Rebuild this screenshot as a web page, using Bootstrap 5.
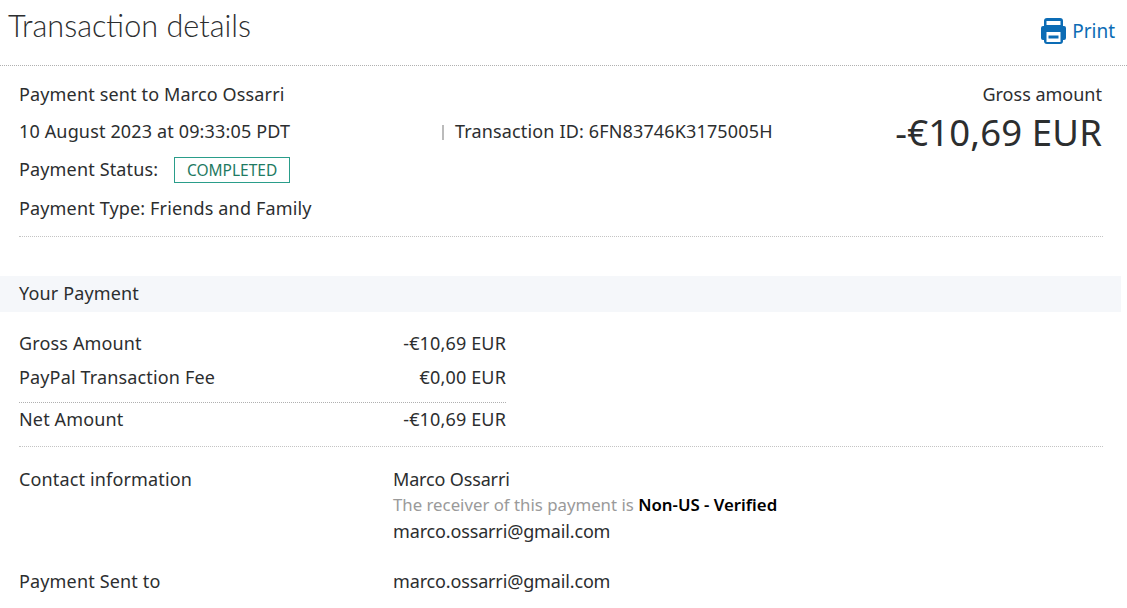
<!DOCTYPE html>
<html lang="en">
<head>
  <meta charset="UTF-8" />
  <title>Transaction details</title>
  <link href="https://cdn.jsdelivr.net/npm/bootstrap@5.3.0/dist/css/bootstrap.min.css" rel="stylesheet" />
  <style>
    body {
      font-family: "Noto Sans", "Open Sans", sans-serif;
      font-size: 18px;
      letter-spacing: .15px;
      color: #2c2e2f;
      background: #fff;
      overflow: hidden;
      height: 608px;
    }
    .page-head {
      height: 66px;
      border-bottom: 1px dotted #b0b0b0;
      padding: 0 12px 0 8px;
    }
    .page-title {
      font-family: "Lato", "Noto Sans", sans-serif;
      font-size: 30.6px;
      font-weight: 300;
      letter-spacing: 0;
      line-height: 52px;
      margin: 0;
      color: #2c2e2f;
    }
    .print-link {
      color: #0c6cb5;
      font-size: 19px;
      letter-spacing: 0;
      text-decoration: none;
      margin-top: 17px;
      gap: 6px;
    }
    .summary {
      margin: 0 24px 0 19px;
      height: 171px;
      border-bottom: 1px dotted #c4c4c4;
      padding-top: 9px;
    }
    .line-a { height: 38px; line-height: 38px; }
    .line-top { height: 37px; }
    .line-status { height: 39px; }
    .date-col { width: 423px; }
    .txn-id::before { content: ""; display: inline-block; width: 2px; height: 15px; background: #bbb; margin-right: 11px; vertical-align: -2px; }
    .amount-col { margin-right: 1px; }
    .amount-label { letter-spacing: 0; }
    .status-tag {
      border: 1px solid #2a9d8a;
      color: #1f7a62;
      font-size: 15.5px;
      letter-spacing: 0;
      line-height: 24px;
      width: 116px;
      text-align: center;
      margin-left: 11px;
      display: inline-block;
    }
    .gross-amt { font-size: 36.5px; line-height: 40px; font-weight: 400; }
    .band {
      margin-top: 39px;
      width: 1121px;
      height: 36px;
      line-height: 34px;
      background: #f5f7fa;
      padding-left: 19px;
    }
    .fees { margin: 14px 24px 0 19px; padding-bottom: 9px; border-bottom: 1px dotted #c4c4c4; }
    .fee-row { width: 487px; height: 34px; line-height: 34px; }
    .fee-net { border-top: 1px dotted #b0b0b0; height: 35px; margin-top: 8px; line-height: 32px; }
    .info { margin: 19px 24px 0 19px; }
    .info-label { width: 374px; flex: none; }
    .info-val { line-height: 26px; letter-spacing: -.15px; }
    .muted-line { color: #9a9a9a; font-size: 16.8px; letter-spacing: 0; }
    .muted-line b { color: #000; font-weight: 600; }
    .info-next { margin-top: 24px; }
  </style>
</head>
<body>
  <div class="page-head d-flex justify-content-between align-items-start">
    <h1 class="page-title">Transaction details</h1>
    <a class="print-link d-flex align-items-center" href="#">
      <svg width="25" height="26" viewBox="0 0 25 26"><path fill="#0c6cb5" fill-rule="evenodd" d="M6 0h13a3 3 0 0 1 3 3v5h1a2 2 0 0 1 2 2v10a2 2 0 0 1-2 2h-1v1a3 3 0 0 1-3 3H6a3 3 0 0 1-3-3v-1H2a2 2 0 0 1-2-2V10a2 2 0 0 1 2-2h1V3a3 3 0 0 1 3-3zM5.500 3v4h14V3zM5.500 14v10h14V14z"/><rect x="7.500" y="17.500" width="10" height="3" fill="#0c6cb5"/></svg>
      Print
    </a>
  </div>
  <div class="summary d-flex justify-content-between">
    <div>
      <div class="line-a line-top">Payment sent to Marco Ossarri</div>
      <div class="line-a d-flex"><span class="date-col">10 August 2023 at 09:33:05 PDT</span><span class="txn-id">Transaction ID: 6FN83746K3175005H</span></div>
      <div class="line-a line-status">Payment Status: <span class="status-tag">COMPLETED</span></div>
      <div class="line-a">Payment Type: Friends and Family</div>
    </div>
    <div class="amount-col text-end">
      <div class="line-a line-top amount-label">Gross amount</div>
      <div class="gross-amt">-€10,69 EUR</div>
    </div>
  </div>
  <div class="band">Your Payment</div>
  <div class="fees">
    <div class="fee-row d-flex justify-content-between"><span>Gross Amount</span><span>-€10,69 EUR</span></div>
    <div class="fee-row d-flex justify-content-between"><span>PayPal Transaction Fee</span><span>€0,00 EUR</span></div>
    <div class="fee-row fee-net d-flex justify-content-between"><span>Net Amount</span><span>-€10,69 EUR</span></div>
  </div>
  <div class="info d-flex">
    <div class="info-label">Contact information</div>
    <div class="info-val">
      <div>Marco Ossarri</div>
      <div class="muted-line">The receiver of this payment is <b>Non-US - Verified</b></div>
      <div>marco.ossarri@gmail.com</div>
    </div>
  </div>
  <div class="info info-next d-flex">
    <div class="info-label">Payment Sent to</div>
    <div class="info-val">marco.ossarri@gmail.com</div>
  </div>
</body>
</html>
